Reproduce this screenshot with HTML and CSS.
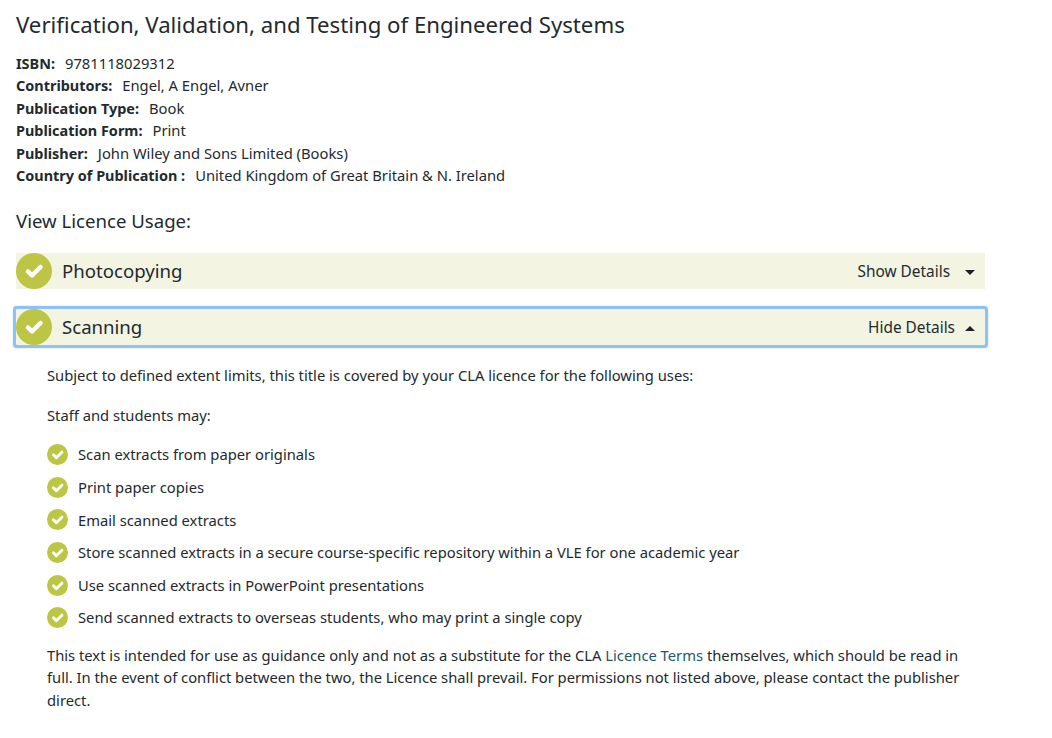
FILE: index.html
```
<!DOCTYPE html>
<html lang="en">
<head>
<meta charset="utf-8">
<title>Verification, Validation, and Testing of Engineered Systems</title>
<link rel="stylesheet" href="styles.css">
</head>
<body>
<main class="page">
  <h1 class="title">Verification, Validation, and Testing of Engineered Systems</h1>
  <dl class="meta">
    <div class="meta-row"><dt>ISBN:</dt><dd>9781118029312</dd></div>
    <div class="meta-row"><dt>Contributors:</dt><dd>Engel, A Engel, Avner</dd></div>
    <div class="meta-row"><dt>Publication Type:</dt><dd>Book</dd></div>
    <div class="meta-row"><dt>Publication Form:</dt><dd>Print</dd></div>
    <div class="meta-row"><dt>Publisher:</dt><dd>John Wiley and Sons Limited (Books)</dd></div>
    <div class="meta-row"><dt>Country of Publication :</dt><dd>United Kingdom of Great Britain &amp; N. Ireland</dd></div>
  </dl>
  <h2 class="usage">View Licence Usage:</h2>
  <div class="bar">
    <svg class="check check-lg" viewBox="0 0 36 36"><circle cx="18" cy="18" r="18"/><path d="M12 18.500l4 4 8.500-8.500"/></svg>
    <span class="bar-title">Photocopying</span>
    <span class="bar-toggle">Show Details<i class="caret caret-down"></i></span>
  </div>
  <div class="bar bar-open">
    <svg class="check check-lg" viewBox="0 0 36 36"><circle cx="18" cy="18" r="18"/><path d="M12 18.500l4 4 8.500-8.500"/></svg>
    <span class="bar-title">Scanning</span>
    <span class="bar-toggle">Hide Details<i class="caret caret-up"></i></span>
  </div>
  <section class="details">
    <p class="intro">Subject to defined extent limits, this title is covered by your CLA licence for the following uses:</p>
    <p class="intro">Staff and students may:</p>
    <ul class="uses">
      <li><svg class="check" viewBox="0 0 36 36"><circle cx="18" cy="18" r="18"/><path d="M11 18.500l5 5 9.500-9.500"/></svg>Scan extracts from paper originals</li>
      <li><svg class="check" viewBox="0 0 36 36"><circle cx="18" cy="18" r="18"/><path d="M11 18.500l5 5 9.500-9.500"/></svg>Print paper copies</li>
      <li><svg class="check" viewBox="0 0 36 36"><circle cx="18" cy="18" r="18"/><path d="M11 18.500l5 5 9.500-9.500"/></svg>Email scanned extracts</li>
      <li><svg class="check" viewBox="0 0 36 36"><circle cx="18" cy="18" r="18"/><path d="M11 18.500l5 5 9.500-9.500"/></svg>Store scanned extracts in a secure course-specific repository within a VLE for one academic year</li>
      <li><svg class="check" viewBox="0 0 36 36"><circle cx="18" cy="18" r="18"/><path d="M11 18.500l5 5 9.500-9.500"/></svg>Use scanned extracts in PowerPoint presentations</li>
      <li><svg class="check" viewBox="0 0 36 36"><circle cx="18" cy="18" r="18"/><path d="M11 18.500l5 5 9.500-9.500"/></svg>Send scanned extracts to overseas students, who may print a single copy</li>
    </ul>
    <p class="note">This text is intended for use as guidance only and not as a substitute for the CLA <a href="#">Licence Terms</a> themselves, which should be read in full. In the event of conflict between the two, the Licence shall prevail. For permissions not listed above, please contact the publisher direct.</p>
  </section>
</main>
</body>
</html>
```
FILE: styles.css
```
* { box-sizing: border-box; }
html, body { margin: 0; background: #fff; }
body {
  font-family: "Noto Sans", "Open Sans", sans-serif;
  color: #222a30;
  font-size: 14.75px;
  line-height: 22.5px;
}
.page { width: 1052px; height: 738px; padding: 11px 0 0 16px; overflow: hidden; }
.title { margin: 0; font-size: 22.2px; font-weight: 400; line-height: 28px; }
.meta { margin: 13px 0 0; }
.meta-row { display: flex; align-items: baseline; gap: 10px; height: 22.4px; }
.meta-row dt { font-weight: 700; font-size: 14.45px; }
.meta-row dd { margin: 0; }
.usage { margin: 23px 0 0; font-size: 18.6px; font-weight: 400; line-height: 24px; }
.bar {
  display: flex;
  align-items: center;
  width: 969px;
  height: 36px;
  margin-top: 20px;
  padding-right: 10px;
  background: #f3f4e2;
}
.bar-open {
  outline: 3px solid #8fc0f6;
  border-radius: 1px;
  box-shadow: 0 0 2px 3px rgba(143, 192, 246, 0.6);
}
.check { flex: none; width: 21px; height: 21px; margin-right: 10px; }
.check circle { fill: #bdc545; }
.check path { fill: none; stroke: #fff; stroke-width: 5; stroke-linecap: round; stroke-linejoin: round; }
.check-lg { width: 36px; height: 36px; margin-right: 0; }
.check-lg path { stroke-width: 4.5; }
.bar-title { flex: 1; margin-left: 10px; font-size: 18.6px; }
.bar-toggle { display: flex; align-items: center; padding-top: 2px; font-size: 15.4px; }
.caret { width: 0; height: 0; border-left: 5px solid transparent; border-right: 5px solid transparent; }
.caret-down { margin-left: 15px; border-top: 5px solid #1d2226; }
.caret-up { margin-left: 10px; border-bottom: 5px solid #1d2226; }
.details { margin: 19px 0 0 31px; width: 925px; }
.intro { margin: 0 0 17px; }
.intro + .intro { margin-bottom: 12px; }
.uses { margin: 0; padding: 0; list-style: none; }
.uses li { display: flex; align-items: center; height: 32.6px; }
.note { margin: 10px 0 0; }
.note a { color: #1d5a63; text-decoration: none; }
```
